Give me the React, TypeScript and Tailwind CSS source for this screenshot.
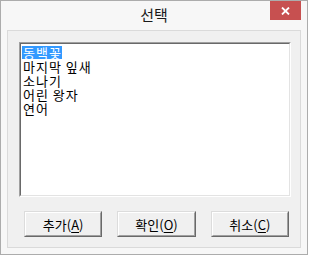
import React from "react";

const ITEMS = ["동백꽃", "마지막 잎새", "소나기", "어린 왕자", "연어"];

const BUTTONS = [
  { label: "추가", key: "A" },
  { label: "확인", key: "O" },
  { label: "취소", key: "C" },
];

function DialogButton({ label, hotkey }: { label: string; hotkey: string }) {
  return (
    <button
      type="button"
      className="w-[79px] h-[26px] border border-t-[#dcdcdc] border-l-[#dcdcdc] border-b-[#696969] border-r-[#696969] bg-[#f0f0f0] p-0"
    >
      <div className="w-full h-full flex items-center justify-center border border-t-white border-l-white border-b-[#a0a0a0] border-r-[#a0a0a0] text-[13px] text-black leading-none">
        {label}(<span className="underline underline-offset-2">{hotkey}</span>)
      </div>
    </button>
  );
}

export default function App() {
  return (
    <div className="w-[308px] h-[255px] flex flex-col bg-[#f7f7f7] border border-[#acacac] font-['Noto_Sans_CJK_KR',sans-serif] select-none">
      {/* title bar */}
      <div className="relative h-[29px] flex items-center justify-center pb-[3px]">
        <span className="text-[15px] text-[#1a1a1a] leading-none">선택</span>
        <div className="absolute top-0 right-[6px] w-[31px] h-[19px] bg-[#c75050] flex items-center justify-center">
          <svg width="9" height="8" viewBox="0 0 9 8">
            <path d="M1 0.5 L8 7.5 M8 0.5 L1 7.5" stroke="white" strokeWidth="1.8" />
          </svg>
        </div>
      </div>

      {/* client area */}
      <div className="mx-[6px] h-[218px] border border-[#dadada] bg-[#f0f0f0] px-[11px] pt-[11px]">
        <div className="w-[272px] h-[155px] border border-t-[#a0a0a0] border-l-[#a0a0a0] border-b-white border-r-white">
          <div className="w-full h-full border border-t-[#696969] border-l-[#696969] border-b-[#e3e3e3] border-r-[#e3e3e3] bg-white pl-[1px] pt-[1px]">
            {ITEMS.map((item, i) => (
              <div key={item} className="h-[14px] flex items-center">
                <span
                  className={`h-[13px] pl-[1px] text-[13px] leading-[13px] tracking-[1px] whitespace-pre ${
                    i === 0 ? "bg-[#3399ff] text-white" : "text-black"
                  }`}
                >
                  {item}
                </span>
              </div>
            ))}
          </div>
        </div>

        <div className="mt-[14px] pl-[5px] flex gap-[15px]">
          {BUTTONS.map((b) => (
            <DialogButton key={b.key} label={b.label} hotkey={b.key} />
          ))}
        </div>
      </div>
    </div>
  );
}
